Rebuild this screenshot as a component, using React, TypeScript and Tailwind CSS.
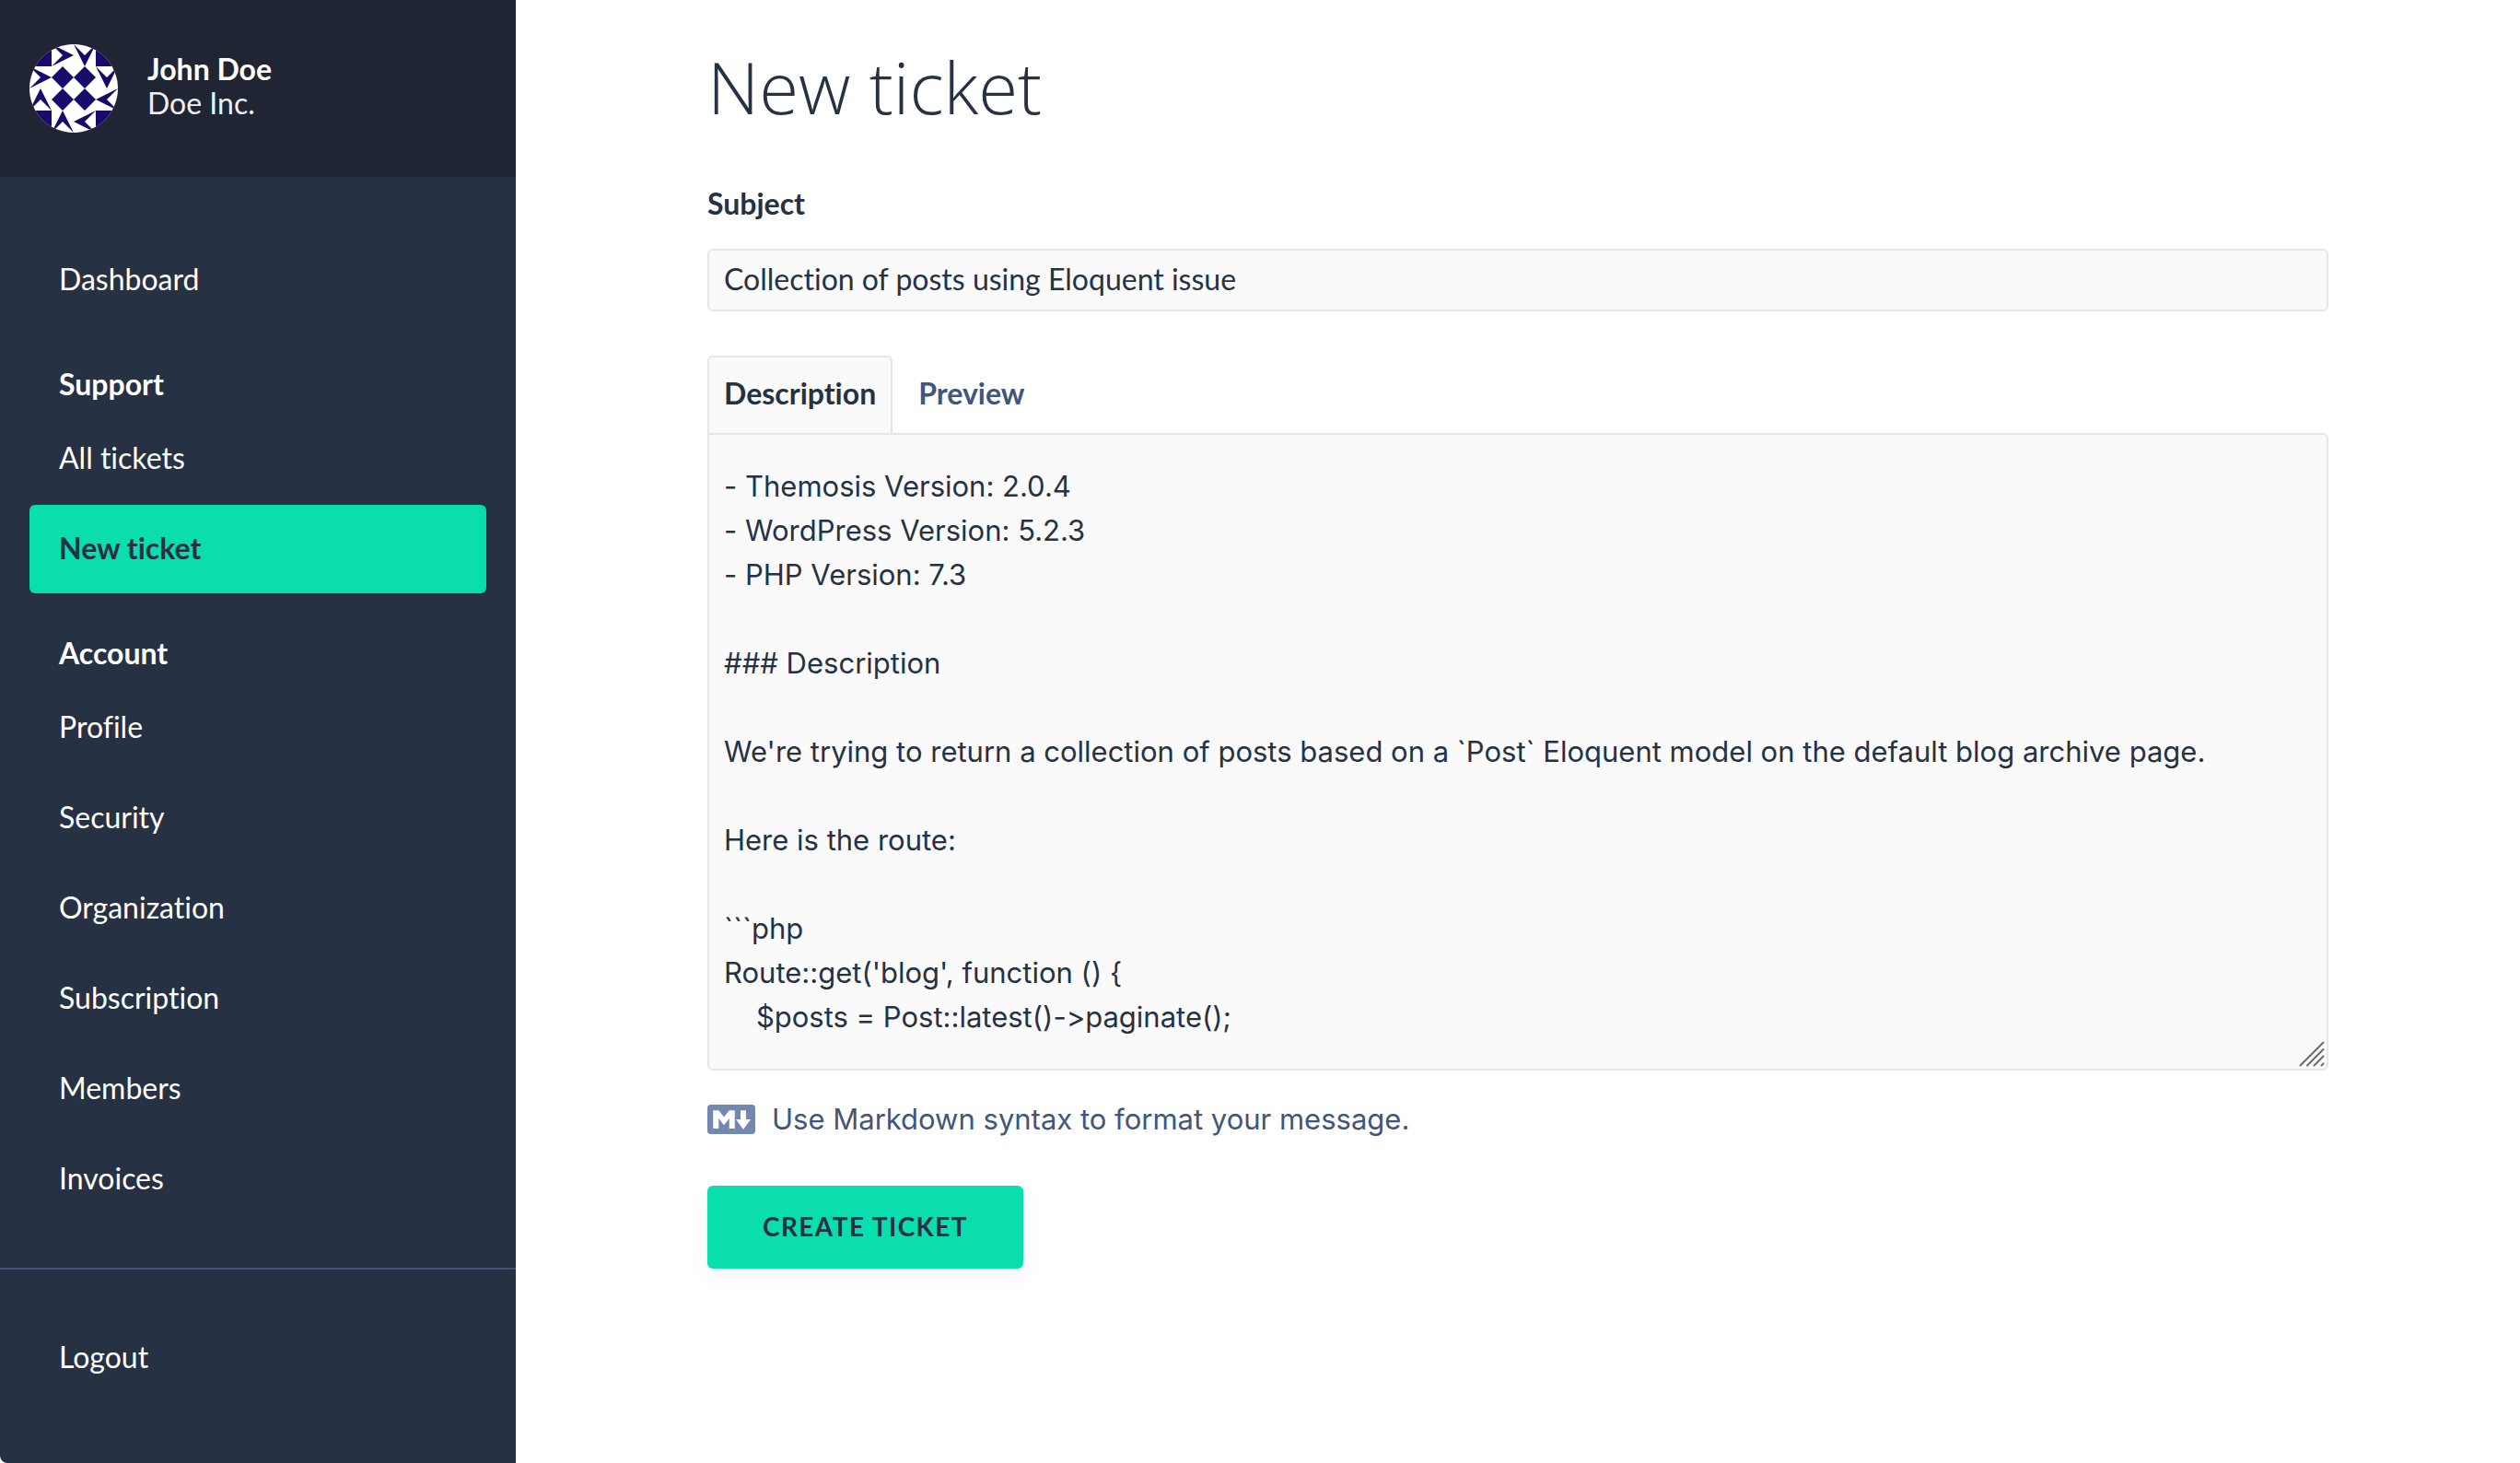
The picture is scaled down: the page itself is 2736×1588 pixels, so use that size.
import { useState } from "react";
import clsx from "clsx";

interface NavItem {
  label: string;
  active?: boolean;
}

interface NavSection {
  title?: string;
  items: NavItem[];
}

const sections: NavSection[] = [
  { items: [{ label: "Dashboard" }] },
  {
    title: "Support",
    items: [{ label: "All tickets" }, { label: "New ticket", active: true }],
  },
  {
    title: "Account",
    items: [
      { label: "Profile" },
      { label: "Security" },
      { label: "Organization" },
      { label: "Subscription" },
      { label: "Members" },
      { label: "Invoices" },
    ],
  },
];

const initialDescription = `- Themosis Version: 2.0.4
- WordPress Version: 5.2.3
- PHP Version: 7.3

### Description

We're trying to return a collection of posts based on a \`Post\` Eloquent model on the default blog archive page.

Here is the route:

\`\`\`php
Route::get('blog', function () {
    $posts = Post::latest()->paginate();`;

function Avatar() {
  return (
    <svg viewBox="0 0 96 96" className="size-24 shrink-0 rounded-full bg-white" fill="#150c6b" aria-hidden="true">
      {/* corners */}
      <path d="M0 0h24v24H0zM72 0h24v24H72zM0 72h24v24H0zM72 72h24v24H72z" />
      {/* diamonds */}
      <path d="M36 24l12 12-12 12-12-12zM60 24l12 12-12 12-12-12zM36 48l12 12-12 12-12-12zM60 48l12 12-12 12-12-12z" />
      {/* arrows */}
      <path d="M48 12L24 0l12 12-12 12zM24 36L0 24l12 12L0 48z" />
      <path d="M60 24L48 0l12 12L72 0zM84 48L72 24l12 12 12-12z" />
      <path d="M12 48L0 72l12-12 12 12zM36 72L24 96l12-12 12 12z" />
      <path d="M72 60l24-12-12 12 12 12zM48 84l24-12-12 12 12 12z" />
    </svg>
  );
}

function MarkdownIcon() {
  return (
    <svg viewBox="0 0 208 128" className="h-8 w-[52px] shrink-0" aria-hidden="true">
      <rect width="208" height="128" rx="15" fill="#7288b0" />
      <path
        fill="#fff"
        d="M25 104V25h24l23 29 23-29h24v79H95V60L72 89 49 60v44zM156 108l-32-44h20V25h24v39h20z"
      />
    </svg>
  );
}

function NavLink({ label, active }: NavItem) {
  return (
    <li className="mb-0.5">
      <a
        href="#"
        aria-current={active ? "page" : undefined}
        className={clsx(
          "block rounded-md px-8 pt-[23px] pb-[25px] text-[32px] leading-[48px]",
          active ? "bg-[#0bdeae] font-bold text-[#263144]" : "text-white"
        )}
      >
        {label}
      </a>
    </li>
  );
}

function Sidebar() {
  return (
    <aside className="w-[560px] shrink-0 rounded-bl-lg bg-[#263144] text-white">
      <div className="flex h-48 items-center gap-8 bg-[#1f2533] px-8">
        <Avatar />
        <div className="pb-1.5 text-[32px] leading-[37px]">
          <p className="font-bold">John Doe</p>
          <p className="text-[#edf0f5]">Doe Inc.</p>
        </div>
      </div>

      <nav className="px-8 pt-16 pb-[46px]">
        {sections.map((section, i) => (
          <div key={i}>
            {section.title && (
              <h2 className="mt-[41px] mb-[9px] px-8 text-[32px] leading-[48px] font-bold">{section.title}</h2>
            )}
            <ul>
              {section.items.map((item) => (
                <NavLink key={item.label} {...item} />
              ))}
            </ul>
          </div>
        ))}
      </nav>

      <ul className="border-t-2 border-[#40547a] px-8 py-12">
        <NavLink label="Logout" />
      </ul>
    </aside>
  );
}

function TicketForm() {
  const [subject, setSubject] = useState("Collection of posts using Eloquent issue");
  const [description, setDescription] = useState(initialDescription);
  const [tab, setTab] = useState<"description" | "preview">("description");

  const tabClass = (active: boolean) =>
    clsx(
      "h-[84px] rounded-t-md border-2 border-b-0 px-4 pb-1 text-[32px] leading-[48px] font-bold",
      active ? "border-[#e6e6e6] bg-[#fafafa] text-[#263144]" : "border-transparent text-[#42557b]"
    );

  return (
    <form onSubmit={(e) => e.preventDefault()}>
      <label htmlFor="subject" className="block text-[32px] leading-[48px] font-bold">
        Subject
      </label>
      <input
        id="subject"
        type="text"
        value={subject}
        onChange={(e) => setSubject(e.target.value)}
        className="mt-[25px] block h-[68px] w-full rounded-md border-2 border-[#e6e6e6] bg-[#fafafa] px-4 pb-1 text-[32px] outline-none"
      />

      <div role="tablist" className="mt-12 flex gap-2.5">
        <button
          type="button"
          role="tab"
          aria-selected={tab === "description"}
          onClick={() => setTab("description")}
          className={tabClass(tab === "description")}
        >
          Description
        </button>
        <button
          type="button"
          role="tab"
          aria-selected={tab === "preview"}
          onClick={() => setTab("preview")}
          className={tabClass(tab === "preview")}
        >
          Preview
        </button>
      </div>

      <div className="relative">
        <textarea
          aria-label="Description"
          rows={13}
          readOnly={tab === "preview"}
          value={description}
          onChange={(e) => setDescription(e.target.value)}
          className="block w-full resize-none overflow-hidden rounded-md rounded-tl-none border-2 border-[#e6e6e6] bg-[#fafafa] px-4 py-8 font-['Inter',sans-serif] text-[31px] leading-[48px] outline-none"
        />
        <svg
          viewBox="0 0 28 28"
          className="pointer-events-none absolute right-1 bottom-1 size-7"
          stroke="#6b6b6b"
          strokeWidth="2"
          strokeLinecap="round"
          aria-hidden="true"
        >
          <path d="M1.5 26.5l25-25M9 26.5L26.5 9M16.5 26.5l10-10M24.5 26.5l2-2" />
        </svg>
      </div>

      <p className="mt-[29px] flex items-center gap-[18px] font-['Inter',sans-serif] text-[31px] leading-[48px] text-[#42557b]">
        <MarkdownIcon />
        Use Markdown syntax to format your message.
      </p>

      <button
        type="submit"
        className="mt-12 h-[90px] rounded-md bg-[#0bdeae] px-[60px] pb-0.5 text-[28px] font-bold tracking-wider uppercase shadow-[0_8px_24px_rgba(0,0,0,0.05)]"
      >
        Create ticket
      </button>
    </form>
  );
}

export default function App() {
  return (
    <div className="flex min-h-screen bg-white font-['Lato',sans-serif] text-[#263144] [font-feature-settings:'calt'_0] [font-variant-ligatures:none]">
      <Sidebar />
      <main className="relative z-10 min-w-0 flex-1 bg-white px-52 pt-[46px] shadow-[0_30px_60px_rgba(0,0,0,0.05)]">
        <h1 className="mb-[55px] font-['Open_Sans',sans-serif] text-[78px] leading-[96px] font-light">New ticket</h1>
        <TicketForm />
      </main>
    </div>
  );
}
